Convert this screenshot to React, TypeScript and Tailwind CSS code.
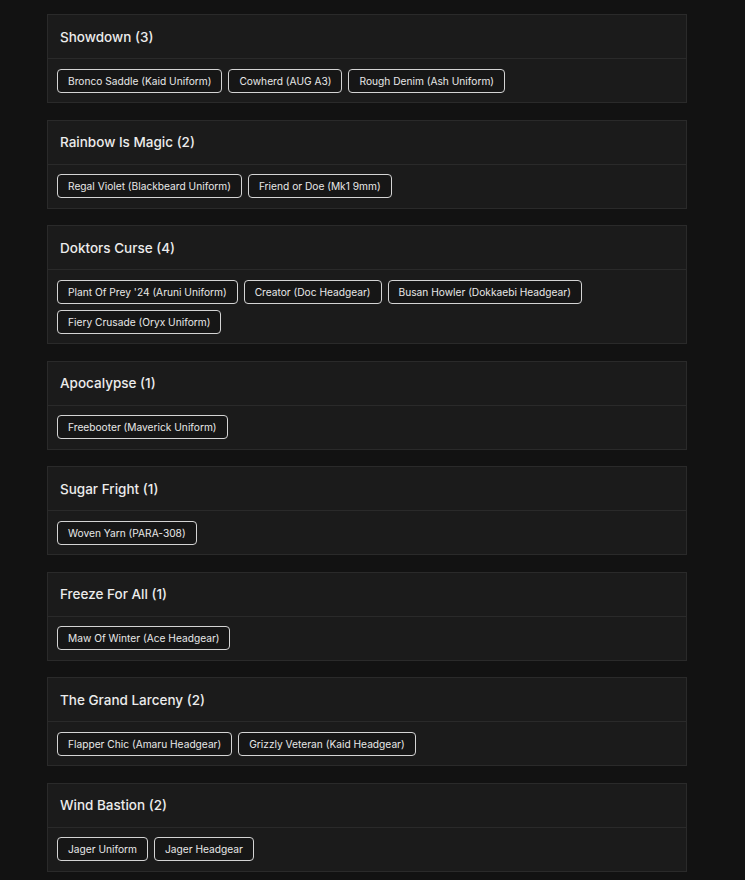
import React from "react";

interface Bundle {
  name: string;
  items: string[];
}

const bundles: Bundle[] = [
  {
    name: "Showdown",
    items: [
      "Bronco Saddle (Kaid Uniform)",
      "Cowherd (AUG A3)",
      "Rough Denim (Ash Uniform)",
    ],
  },
  {
    name: "Rainbow Is Magic",
    items: ["Regal Violet (Blackbeard Uniform)", "Friend or Doe (Mk1 9mm)"],
  },
  {
    name: "Doktors Curse",
    items: [
      "Plant Of Prey '24 (Aruni Uniform)",
      "Creator (Doc Headgear)",
      "Busan Howler (Dokkaebi Headgear)",
      "Fiery Crusade (Oryx Uniform)",
    ],
  },
  { name: "Apocalypse", items: ["Freebooter (Maverick Uniform)"] },
  { name: "Sugar Fright", items: ["Woven Yarn (PARA-308)"] },
  { name: "Freeze For All", items: ["Maw Of Winter (Ace Headgear)"] },
  {
    name: "The Grand Larceny",
    items: ["Flapper Chic (Amaru Headgear)", "Grizzly Veteran (Kaid Headgear)"],
  },
  { name: "Wind Bastion", items: ["Jager Uniform", "Jager Headgear"] },
];

const BundleCard: React.FC<{ bundle: Bundle }> = ({ bundle }) => {
  return (
    <div className="border border-[#2a2a2a] bg-[#1b1b1b]">
      <div className="border-b border-[#2a2a2a] px-3 py-[11.5px]">
        <h2 className="text-[13.5px] leading-5 font-medium text-[#ececec]">
          {bundle.name} ({bundle.items.length})
        </h2>
      </div>
      <div className="flex flex-wrap gap-1.5 px-[9px] py-[9.5px]">
        {bundle.items.map((item, i) => (
          <span
            key={i}
            className="rounded-[4px] border border-[#d4d4d4] bg-[#161616] px-[10px] py-[3px] text-[10.2px] leading-4 text-[#e8e8e8]"
          >
            {item}
          </span>
        ))}
      </div>
    </div>
  );
};

export default function App() {
  return (
    <div
      className="min-h-screen bg-[#121212] px-[47px] pt-[14px]"
      style={{ fontFamily: 'Inter, "Noto Sans", sans-serif' }}
    >
      <div className="flex w-[640px] flex-col gap-[16.5px]">
        {bundles.map((b, i) => (
          <BundleCard key={i} bundle={b} />
        ))}
      </div>
    </div>
  );
}
